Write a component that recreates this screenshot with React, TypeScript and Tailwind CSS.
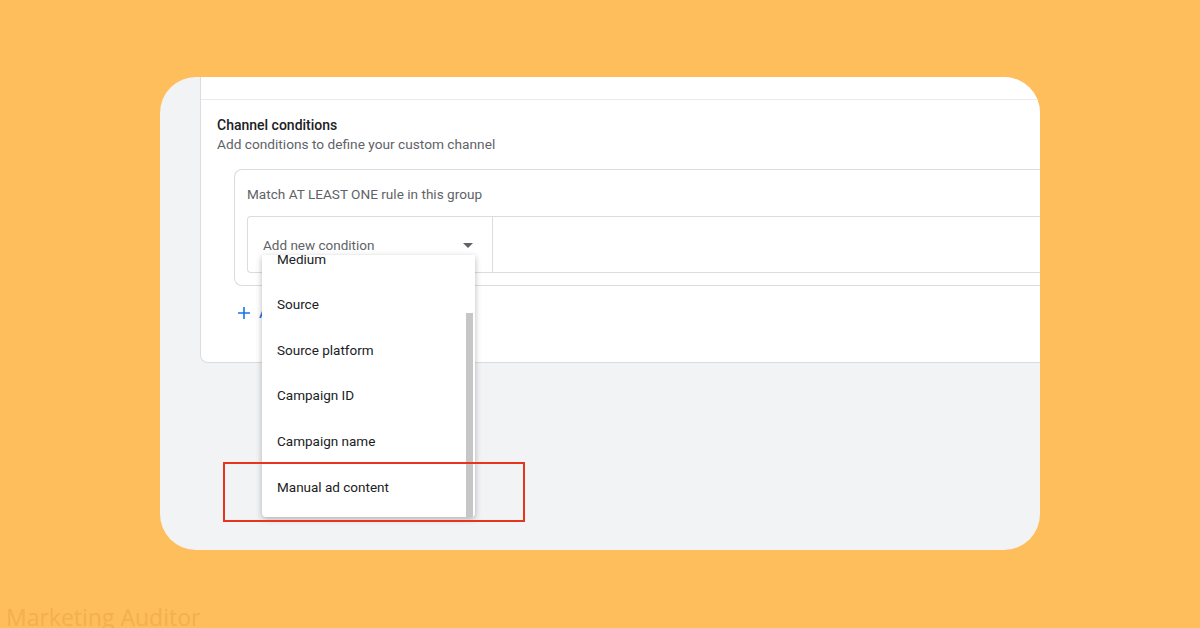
import React from 'react';

const menuItems = ['Medium', 'Source', 'Source platform', 'Campaign ID', 'Campaign name', 'Manual ad content'];

const ConditionMenu = () => (
  <div className="absolute left-[102px] top-[178px] w-[213px] h-[262px] overflow-hidden rounded-b bg-white shadow-[0_2px_6px_rgba(0,0,0,0.28)]">
    <div className="-mt-[19px] flex flex-col">
      {menuItems.map((item) => (
        <div key={item} className="flex h-[45.6px] items-center pl-[15px] text-[13.5px] text-[#202124]">
          {item}
        </div>
      ))}
    </div>
    {/* scrollbar thumb */}
    <div className="absolute right-[2px] top-[58px] bottom-0 w-[7px] bg-[#c6c6c6]" />
  </div>
);

export default function App() {
  return (
    <div className="h-[628px] w-[1200px] overflow-hidden bg-[#ffbe5c] font-['Roboto',sans-serif]">
      <div className="relative ml-[160px] mt-[77px] flex h-[473px] w-[880px] overflow-hidden rounded-[36px] bg-[#f1f3f4]">
        <div className="w-[40px] shrink-0" />
        <div className="flex h-[286px] flex-1 flex-col rounded-bl-lg border-b border-l border-[#dadce0] bg-white">
          <div className="h-[23px] shrink-0 border-b border-[#e8eaed]" />
          <div className="pl-[16px] pt-[16px]">
            <div className="text-[14px] font-medium leading-[19px] text-[#202124]">Channel conditions</div>
            <div className="text-[13.7px] leading-[19px] text-[#5f6368]">Add conditions to define your custom channel</div>
            <div className="ml-[17px] mt-[15px] rounded-l-lg border border-r-0 border-[#dadce0] pb-[12px] pl-[12px]">
              <div className="pt-[16px] text-[13.6px] leading-[16px] text-[#5f6368]">Match AT LEAST ONE rule in this group</div>
              <div className="mt-[14px] flex h-[57px] rounded-l border border-r-0 border-[#dadce0]">
                <div className="flex w-[245px] items-center justify-between border-r border-[#dadce0] pl-[15px] pr-[19px] pt-[1px]">
                  <span className="text-[13.5px] text-[#5f6368]">Add new condition</span>
                  <svg width="10" height="5" viewBox="0 0 10 5">
                    <path d="M0 0h10L5 5z" fill="#5f6368" />
                  </svg>
                </div>
                <div className="flex-1" />
              </div>
            </div>
            <div className="ml-[20px] mt-[17px] flex items-center gap-[8px] text-[#1a73e8]">
              <svg width="14" height="14" viewBox="0 0 14 14">
                <path d="M7 1v12M1 7h12" stroke="#1a73e8" strokeWidth="1.6" />
              </svg>
              <span className="text-[13.5px] font-medium">Add condition group</span>
            </div>
          </div>
        </div>
        <ConditionMenu />
        <div className="absolute left-[63px] top-[385px] h-[60px] w-[302px] border-2 border-[#e8331f]" />
      </div>
      <div className="ml-[6px] mt-[52px] font-['Open_Sans',sans-serif] text-[23px] leading-[30px] text-[#f2b04f]">
        Marketing Auditor
      </div>
    </div>
  );
}
